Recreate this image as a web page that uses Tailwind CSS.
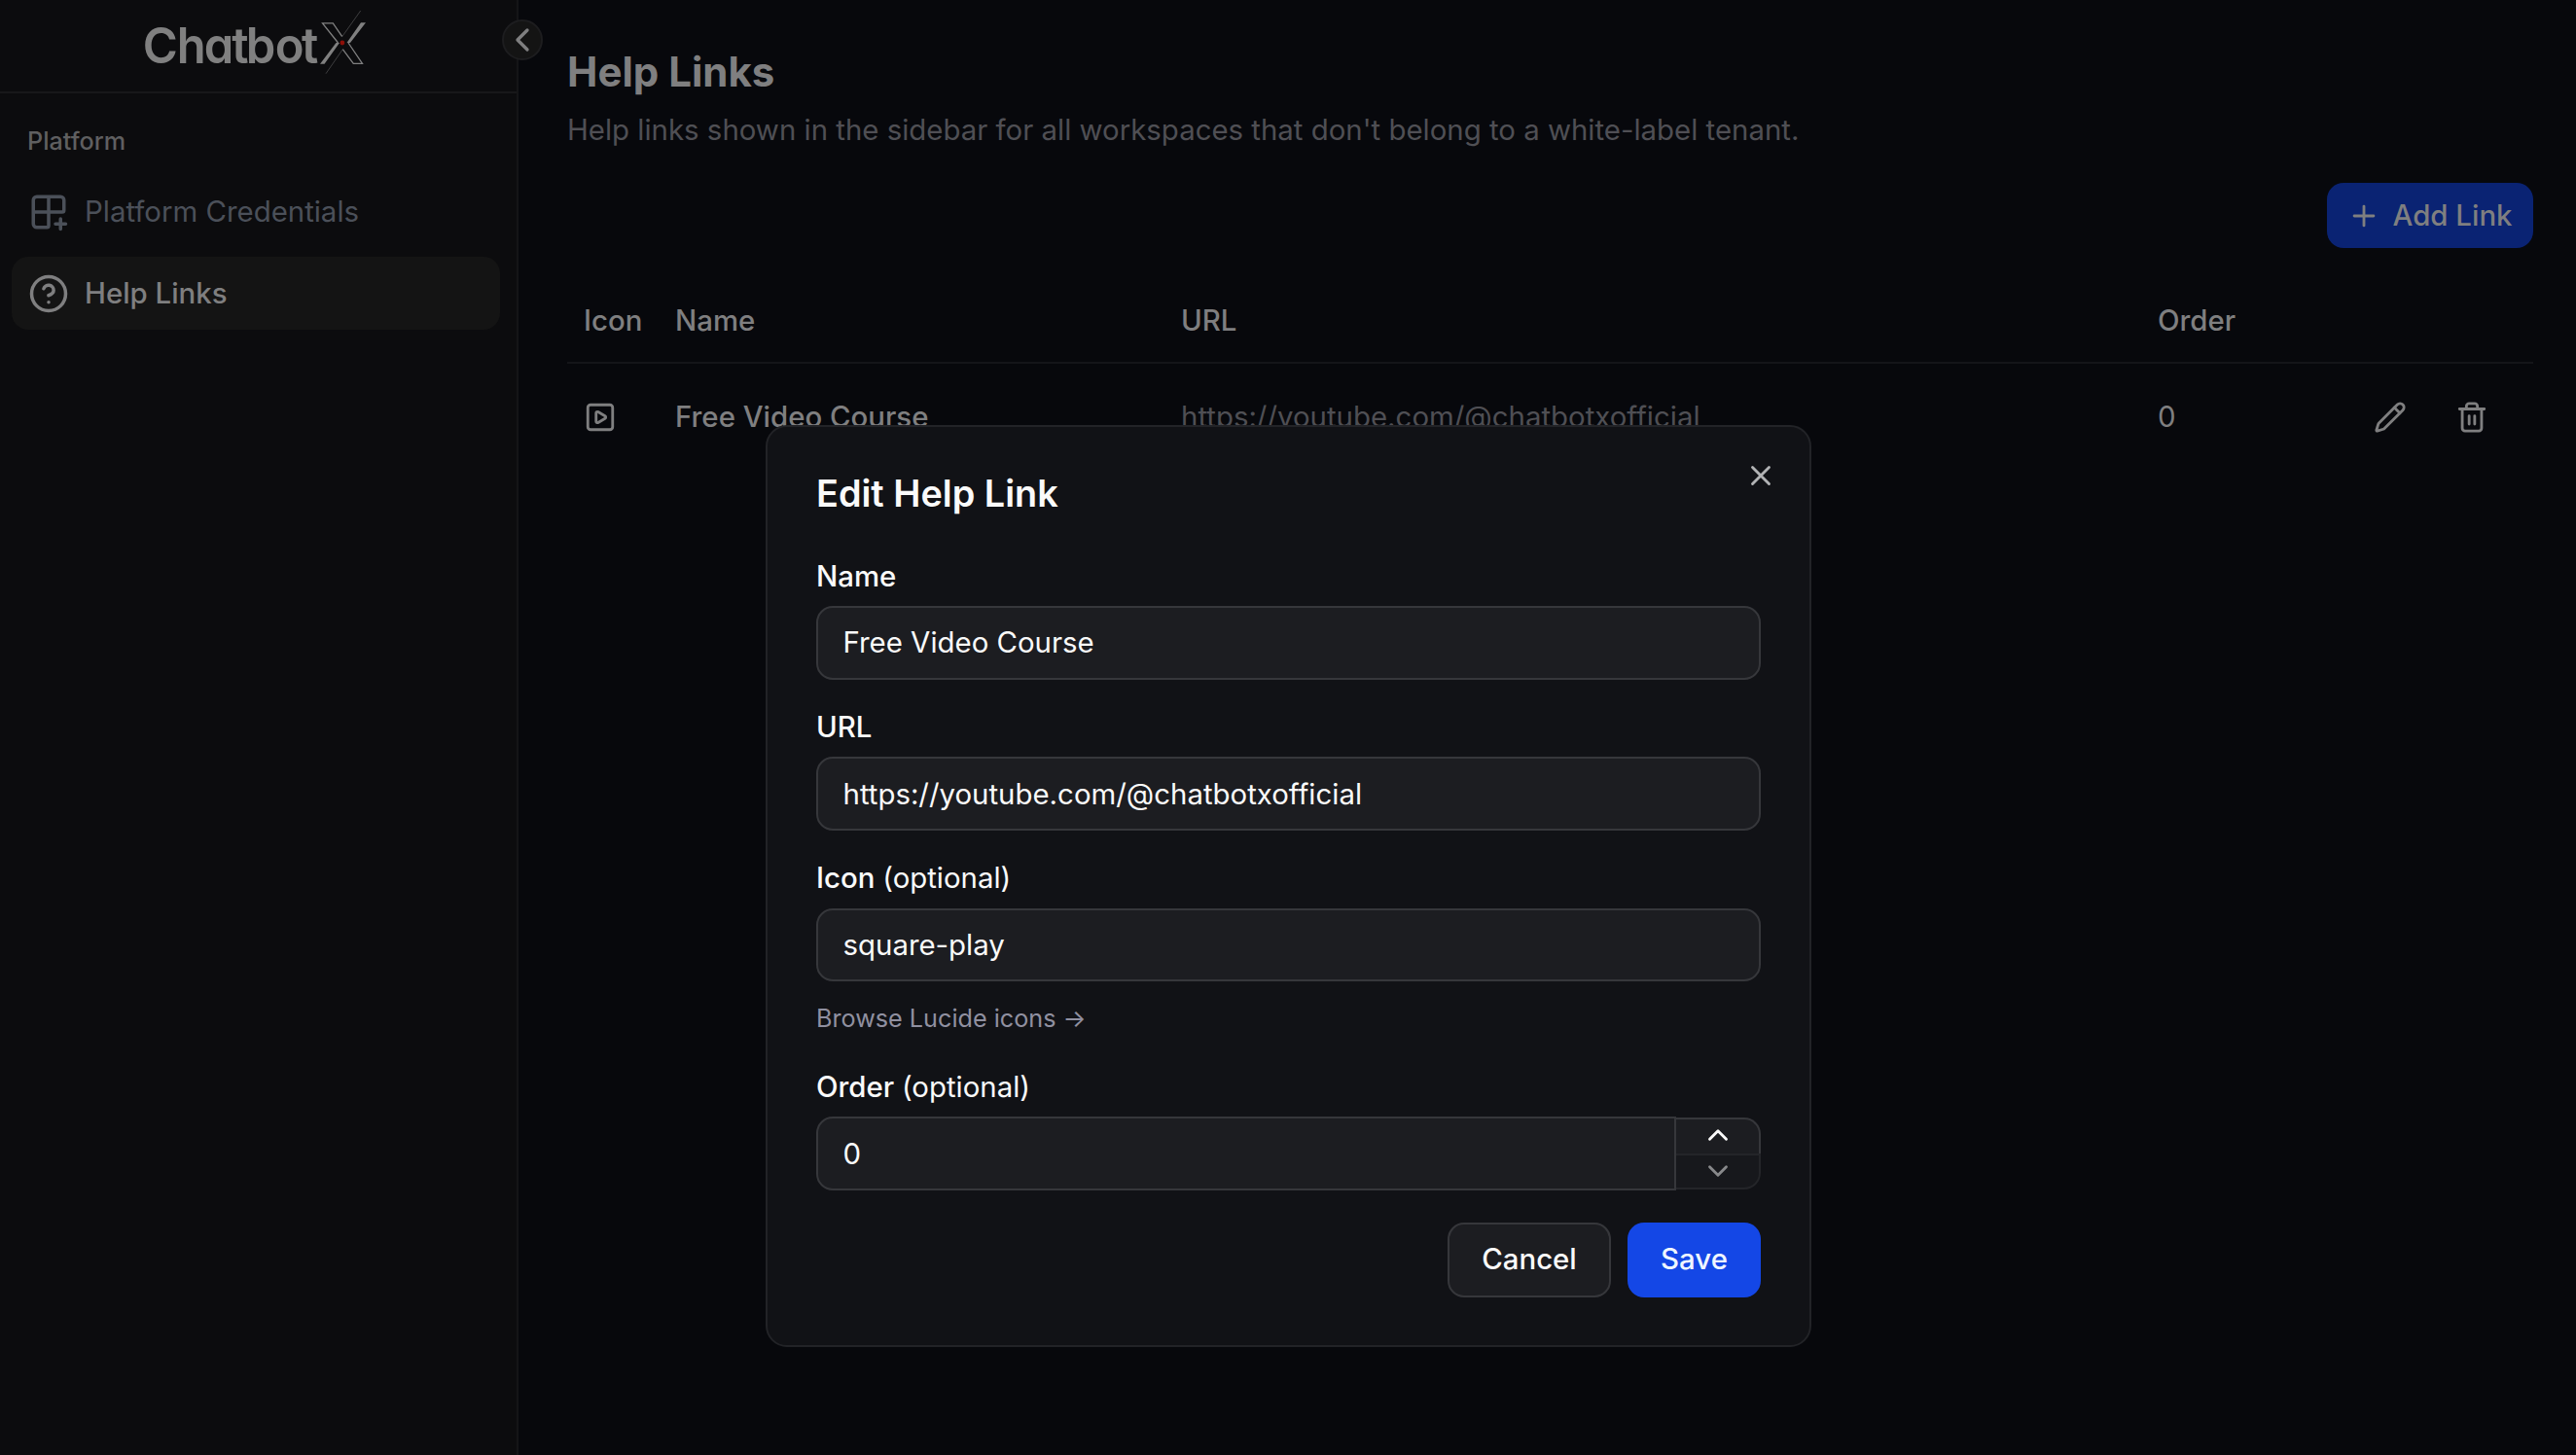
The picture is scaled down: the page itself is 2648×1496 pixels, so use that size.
<!DOCTYPE html>
<html lang="en">
<head>
  <meta charset="UTF-8">
  <meta name="viewport" content="width=device-width, initial-scale=1.0">
  <title>Help Links - ChatbotX</title>
  <script src="https://cdn.jsdelivr.net/npm/@tailwindcss/browser@4"></script>
</head>
<body class="bg-[#07080c] h-screen overflow-hidden font-['Inter',sans-serif] text-[29.4px] leading-[40px] text-[#7f7f80]">
  <div class="flex h-full">

    <!-- Sidebar -->
    <aside class="relative w-[533px] shrink-0 bg-[#0c0c0e] border-r-2 border-[#151517]">
      <div class="h-24 border-b-2 border-[#18181a] pl-[146px]">
        <svg class="w-[240px] h-[90px]" viewBox="0 0 240 90" fill="none">
          <text transform="scale(0.97 1)" x="0.7 36.8 65.7 95 110.1 140.9 169" y="65.3" font-family="Inter" font-weight="600" font-size="50.500" fill="#808080" style="font-feature-settings: 'cv11'">Chatbot</text>
          <path d="M201.500 44L185.500 23.800H196.300L205.700 37.700M206.300 50.700L217.300 65.300H226.500L212 44" stroke="#808080" stroke-width="1.300" />
          <path d="M205.700 37.700L224.700 11M206.300 50.700L189 75.700" stroke="#4a4a4b" stroke-width="0.800" />
          <path d="M199.500 44H203L187.500 65.800H183ZM225 23.200H230L214 44H210.500Z" fill="#808080" />
          <circle cx="205.900" cy="44" r="2.400" fill="#8c0f08" />
        </svg>
      </div>
      <button class="absolute top-5 -right-[27px] size-[42px] rounded-full bg-[#141414] border-2 border-[#1d1d1f] flex items-center justify-center">
        <svg class="size-10 shrink-0" viewBox="0 0 24 24" fill="none" stroke="currentColor" stroke-width="2" stroke-linecap="round" stroke-linejoin="round"><path d="m15 18-6-6 6-6" /></svg>
      </button>

      <nav class="px-3 pt-[29px]">
        <p class="pl-4 text-[25.2px] font-medium text-[#5f5f60]">Platform</p>
        <a class="mt-[15px] h-[75px] rounded-[17px] pl-[17px] flex items-center gap-4 text-[#4b5059]">
          <svg class="size-[42px]" viewBox="0 0 24 24" fill="none" stroke="currentColor" stroke-width="2" stroke-linecap="round" stroke-linejoin="round"><path d="M12 3v17a1 1 0 0 1-1 1H5a2 2 0 0 1-2-2V5a2 2 0 0 1 2-2h14a2 2 0 0 1 2 2v6a1 1 0 0 1-1 1H3" /><path d="M16 19h6M19 22v-6" /></svg>
          <span>Platform Credentials</span>
        </a>
        <a class="mt-[9px] mr-[5px] h-[75px] rounded-[17px] pl-[17px] flex items-center gap-4 bg-[#141414] font-medium">
          <svg class="size-[42px]" viewBox="0 0 24 24" fill="none" stroke="currentColor" stroke-width="2" stroke-linecap="round" stroke-linejoin="round"><circle cx="12" cy="12" r="10" /><path d="M9.090 9a3 3 0 0 1 5.830 1c0 2-3 3-3 3M12 17h.01" /></svg>
          <span>Help Links</span>
        </a>
      </nav>
    </aside>

    <!-- Page content -->
    <main class="flex-1 pl-[50px] pr-11 pt-[49px]">
      <h1 class="text-[42px] leading-[50px] font-bold">Help Links</h1>
      <p class="mt-[15px] text-[#4f4f54]">Help links shown in the sidebar for all workspaces that don't belong to a white-label tenant.</p>
      <div class="mt-[34px] flex justify-end">
        <button class="h-[67px] w-[212px] rounded-[17px] bg-[#0a2373] pl-[21px] flex items-center gap-[12.6px] font-medium">
          <svg class="size-[34px]" viewBox="0 0 24 24" fill="none" stroke="currentColor" stroke-width="2" stroke-linecap="round" stroke-linejoin="round"><path d="M5 12h14M12 5v14" /></svg>
          Add Link
        </button>
      </div>

      <div class="mt-[32px]">
        <div class="grid grid-cols-[94px_520px_1004px_1fr] items-center h-[87px] pl-[17px] border-b-2 border-[#141519] font-medium">
          <span>Icon</span><span>Name</span><span>URL</span><span>Order</span>
        </div>
        <div class="grid grid-cols-[94px_520px_1004px_1fr] items-center h-[109px] pl-[17px]">
          <svg class="size-[34px]" viewBox="0 0 24 24" fill="none" stroke="currentColor" stroke-width="2" stroke-linecap="round" stroke-linejoin="round"><rect x="3" y="3" width="18" height="18" rx="2" /><path d="M9 9.003a1 1 0 0 1 1.517-.859l4.997 2.997a1 1 0 0 1 0 1.718l-4.997 2.997A1 1 0 0 1 9 14.996z" /></svg>
          <span class="font-medium">Free Video Course</span>
          <span class="text-[#4f4f54]">https://youtube.com/@chatbotxofficial</span>
          <div class="flex items-center">
            <span>0</span>
            <div class="ml-auto mr-[46px] flex gap-[50px]">
              <svg class="size-[34px]" viewBox="0 0 24 24" fill="none" stroke="currentColor" stroke-width="2" stroke-linecap="round" stroke-linejoin="round"><path d="M21.174 6.812a1 1 0 0 0-3.986-3.987L3.842 16.174a2 2 0 0 0-.5.83l-1.321 4.352a.5.5 0 0 0 .623.622l4.353-1.320a2 2 0 0 0 .83-.497z" /><path d="m15 5 4 4" /></svg>
              <svg class="size-[34px]" viewBox="0 0 24 24" fill="none" stroke="currentColor" stroke-width="2" stroke-linecap="round" stroke-linejoin="round"><path d="M3 6h18M19 6v14a2 2 0 0 1-2 2H7a2 2 0 0 1-2-2V6M8 6V4a2 2 0 0 1 2-2h4a2 2 0 0 1 2 2v2M10 11v6M14 11v6" /></svg>
            </div>
          </div>
        </div>
      </div>
    </main>
  </div>

  <!-- Edit dialog -->
  <div class="absolute left-[787px] top-[437px] w-[1075px] h-[948px] rounded-[22px] border-2 border-[#222327] bg-[#111216] px-[50px] pt-[47px] text-[#fafafa]">
    <button class="absolute top-[33px] right-[33px] text-[#b2b3b5]">
      <svg class="size-[34px]" viewBox="0 0 24 24" fill="none" stroke="currentColor" stroke-width="2" stroke-linecap="round" stroke-linejoin="round"><path d="M18 6 6 18M6 6l12 12" /></svg>
    </button>
    <h2 class="text-[37.8px] leading-[42px] font-semibold">Edit Help Link</h2>

    <label class="block mt-[45px] font-medium">Name</label>
    <div class="mt-[10px] h-[75.6px] rounded-[17px] border-2 border-[#36373b] bg-[#1c1d21] px-[25.5px] pt-px flex items-center">Free Video Course</div>

    <label class="block mt-[29.8px] font-medium">URL</label>
    <div class="mt-[10px] h-[75.6px] rounded-[17px] border-2 border-[#36373b] bg-[#1c1d21] px-[25.5px] pt-px flex items-center">https://youtube.com/@chatbotxofficial</div>

    <label class="block mt-[29.2px] font-medium">Icon <span class="font-normal">(optional)</span></label>
    <div class="mt-[10.6px] h-[75.6px] rounded-[17px] border-2 border-[#36373b] bg-[#1c1d21] px-[25.5px] pt-px flex items-center">square-play</div>
    <p class="mt-[18px] text-[25.2px] text-[#9090a0]">Browse Lucide icons →</p>

    <label class="block mt-[31px] font-medium">Order <span class="font-normal">(optional)</span></label>
    <div class="mt-[10px] flex">
      <div class="w-[884px] h-[75.6px] rounded-l-[17px] border-2 border-[#36373b] bg-[#1c1d21] px-[25.5px] pt-px flex items-center">0</div>
      <div class="flex-1 mt-px flex flex-col">
        <div class="h-[37px] rounded-tr-[17px] border-t-2 border-r-2 border-[#36373b] bg-[#1c1d21] pb-[3px] flex items-center justify-center">
          <svg class="size-[34px]" viewBox="0 0 24 24" fill="none" stroke="currentColor" stroke-width="2" stroke-linecap="round" stroke-linejoin="round"><path d="m18 15-6-6-6 6" /></svg>
        </div>
        <div class="h-[37px] rounded-br-[17px] border-y-2 border-r-2 border-[#242529] bg-[#17181c] text-[#88898b] pb-px flex items-center justify-center">
          <svg class="size-[34px]" viewBox="0 0 24 24" fill="none" stroke="currentColor" stroke-width="2" stroke-linecap="round" stroke-linejoin="round"><path d="m6 9 6 6 6-6" /></svg>
        </div>
      </div>
    </div>

    <div class="mt-[33px] flex justify-end gap-[17px] font-medium">
      <button class="w-[168px] h-[77px] rounded-[17px] border-2 border-[#36373b] bg-[#1c1d21]">Cancel</button>
      <button class="w-[137px] h-[77px] rounded-[17px] bg-[#1447e6] text-[#eff6ff]">Save</button>
    </div>
  </div>
</body>
</html>
